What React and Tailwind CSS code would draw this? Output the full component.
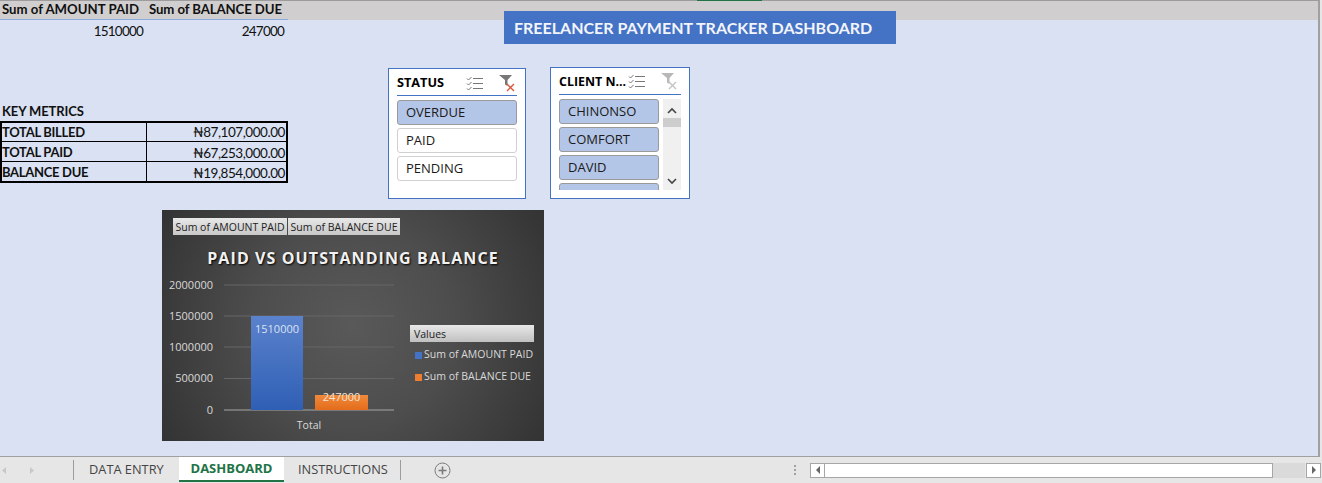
const cellFont = { fontFamily: "Lato, 'Noto Sans', sans-serif" }

function ChecklistIcon({ className }) {
  return (
    <svg width="17" height="15" viewBox="0 0 17 15" className={className} fill="none" stroke="#777777">
      <path d="M1 2.5l1.5 1.5 3-3M1 7.5l1.5 1.5 3-3M1 12.5l1.5 1.5 3-3" strokeWidth="1" />
      <path d="M7 2.5h10M7 7.5h10M7 12.5h10" strokeWidth="1" />
    </svg>
  )
}

function ClearFilterIcon({ active, className }) {
  return (
    <svg width="17" height="18" viewBox="0 0 17 18" className={className} fill="none">
      <path d="M1 1h13L9.5 6v6L7 10.5V6z" fill={active ? '#777777' : '#b8b8b8'} />
      <path d="M9 10l7 7M16 10l-7 7" stroke={active ? '#d9583b' : '#c4c4c4'} strokeWidth="1.4" />
    </svg>
  )
}

function SlicerItem({ label, selected, className = '' }) {
  return (
    <div className={`flex items-center pl-2 text-[13px] text-[#1a1a1a] rounded-[3px] border ${selected ? 'bg-[#b4c6e7] border-[#9a9a9a]' : 'bg-white border-[#d0d0d0]'} ${className}`}>
      {label}
    </div>
  )
}

function Tab({ children, active }) {
  if (active) {
    return (
      <div className="w-[105px] h-[25px] -mt-px bg-white border-b-2 border-[#217346] flex items-center justify-center text-[13px] font-bold text-[#217346]">
        {children}
      </div>
    )
  }
  return <div className="h-full flex items-center text-[12.8px] text-[#444444]">{children}</div>
}

const ticks = [
  { label: '2000000', y: 75 },
  { label: '1500000', y: 106 },
  { label: '1000000', y: 137 },
  { label: '500000', y: 168.5 },
  { label: '0', y: 200 },
]

function Chart() {
  return (
    <div className="absolute left-[162px] top-[190px] w-[382px] h-[231px] bg-[radial-gradient(circle,#595959_0%,#4d4d4d_45%,#333333_100%)] text-[#d9d9d9]" style={{ fontFamily: "'Open Sans', sans-serif" }}>
      <div className="flex gap-px pl-[11px] pt-2">
        <div className="w-[114px] h-[17px] bg-gradient-to-b from-[#e8e8e8] to-[#c8c8c8] text-[10.5px] leading-[18px] text-center text-[#222222] whitespace-nowrap">Sum of AMOUNT PAID</div>
        <div className="w-[112px] h-[17px] bg-gradient-to-b from-[#e8e8e8] to-[#c8c8c8] text-[10.5px] leading-[18px] text-center text-[#222222] whitespace-nowrap">Sum of BALANCE DUE</div>
      </div>
      <div className="mt-[11px] w-full text-center text-[16px] font-bold tracking-[1.1px] text-[#f2f2f2] [text-shadow:1px_1px_2px_#000000]">
        PAID VS OUTSTANDING BALANCE
      </div>
      <svg width="382" height="231" className="absolute left-0 top-0" fontFamily="'Open Sans', sans-serif" fontSize="10.5">
        <defs>
          <linearGradient id="blueBar" x1="0" y1="0" x2="0" y2="1">
            <stop offset="0" stopColor="#5b82cc" />
            <stop offset="1" stopColor="#2f5fb5" />
          </linearGradient>
          <linearGradient id="orangeBar" x1="0" y1="0" x2="0" y2="1">
            <stop offset="0" stopColor="#f08a3c" />
            <stop offset="1" stopColor="#e36c1a" />
          </linearGradient>
        </defs>
        {ticks.map((t) => (
          <g key={t.label}>
            <line x1="62" x2="232" y1={t.y} y2={t.y} stroke={t.label === '0' ? '#a6a6a6' : '#666666'} />
            <text x="51" y={t.y + 3.5} textAnchor="end" fontSize="11" fill="#d9d9d9">{t.label}</text>
          </g>
        ))}
        <rect x="89" y="106" width="52" height="94" fill="url(#blueBar)" />
        <rect x="153" y="185" width="53" height="15" fill="url(#orangeBar)" />
        <text x="115" y="123" textAnchor="middle" fontSize="11" fill="#d9e2f3">1510000</text>
        <text x="179.5" y="191" textAnchor="middle" fontSize="11" fill="#f2e3d5">247000</text>
        <text x="147" y="219" textAnchor="middle" fill="#d9d9d9">Total</text>
      </svg>
      <div className="absolute left-[248px] top-[115px] w-[124px] text-[10.5px]">
        <div className="h-[17px] pl-1 leading-[19px] bg-gradient-to-b from-[#e8e8e8] to-[#c0c0c0] text-[#222222]">Values</div>
        <div className="mt-[6px] flex h-[14px] items-center gap-[2px] pl-[5px] whitespace-nowrap">
          <span className="w-[7px] h-[7px] bg-[#4472c4]" />
          <span>Sum of AMOUNT PAID</span>
        </div>
        <div className="mt-2 flex h-[14px] items-center gap-[2px] pl-[5px] whitespace-nowrap">
          <span className="w-[7px] h-[7px] bg-[#ed7d31]" />
          <span>Sum of BALANCE DUE</span>
        </div>
      </div>
    </div>
  )
}

function MetricRow({ name, value, height, pad, last }) {
  return (
    <div className={`flex items-center ${height} ${last ? '' : 'border-b border-black'}`}>
      <div className={`w-[145px] h-full border-r border-black flex items-center text-[13px] tracking-[-0.3px] font-bold text-[#111111] ${pad}`}>{name}</div>
      <div className={`flex-1 h-full pr-px flex items-center justify-end text-[13.5px] tracking-[-0.45px] text-[#111111] ${pad}`}>{value}</div>
    </div>
  )
}

export default function App() {
  return (
    <div className="w-[1322px] h-[483px] overflow-hidden flex flex-col bg-[#e6e6e6]" style={{ fontFamily: "'Open Sans', sans-serif" }}>
      <div className="relative w-[1320px] h-[20px] shrink-0 bg-[#d0cece] border-t border-[#9c9c9c] border-r-2 border-r-[#a0a0a0] flex text-[13.2px] font-bold text-[#111111]" style={cellFont}>
        <div className="absolute left-[697px] -top-px w-[65px] h-px bg-[#217346]" />
        <div className="w-[288px] flex items-center pl-[2px] border-b border-[#8ea9db] whitespace-nowrap">
          <span className="w-[147px]">Sum of AMOUNT PAID</span>
          <span className="tracking-[-0.1px]">Sum of BALANCE DUE</span>
        </div>
      </div>

      <div className="relative w-[1320px] flex-1 bg-[#d9e1f2] border-r-2 border-b border-[#a0a0a0]">
        <div className="w-[288px] text-[13.5px] text-[#111111]" style={cellFont}>
          <div className="flex h-[23px] items-center tracking-[-0.8px]">
            <div className="w-[143px] text-right">1510000</div>
            <div className="w-[141px] text-right">247000</div>
          </div>
          <div className="mt-[58px] pl-[2px] pt-[2px] h-5 flex items-center text-[13px] tracking-[-0.1px] font-bold">KEY METRICS</div>
          <div className="border-2 border-black">
            <MetricRow name="TOTAL BILLED" value="₦87,107,000.00" height="h-[19px]" pad="pt-px" />
            <MetricRow name="TOTAL PAID" value="₦67,253,000.00" height="h-5" pad="pt-[3px]" />
            <MetricRow name="BALANCE DUE" value="₦19,854,000.00" height="h-[19px]" pad="pt-[3px]" last />
          </div>
        </div>

        <div className="absolute left-[504px] -top-[9px] w-[392px] h-[33px] bg-[#4472c4] pl-[10px] pt-px flex items-center text-[16px] font-bold text-[#f2f5fb]" style={cellFont}>
          FREELANCER PAYMENT TRACKER DASHBOARD
        </div>

        <div className="absolute left-[388px] top-[48px] w-[138px] h-[131px] bg-white border border-[#4472c4] px-2">
          <div className="h-[27px] flex items-center pt-[2px] border-b border-[#4472c4] text-[12.7px] font-bold text-black">
            <span className="flex-1">STATUS</span>
            <ChecklistIcon className="mr-[15px]" />
            <ClearFilterIcon active className="mr-[2px]" />
          </div>
          <div className="mt-1 flex flex-col gap-[3px]">
            <SlicerItem label="OVERDUE" selected className="h-[25px]" />
            <SlicerItem label="PAID" className="h-[25px]" />
            <SlicerItem label="PENDING" className="h-[25px]" />
          </div>
        </div>

        <div className="absolute left-[550px] top-[47px] w-[140px] h-[132px] bg-white border border-[#4472c4] px-2">
          <div className="h-[27px] flex items-center pt-[2px] border-b border-[#4472c4] text-[12.4px] font-bold text-black">
            <span className="flex-1 whitespace-nowrap">CLIENT N...</span>
            <ChecklistIcon className="mr-[15px] -mt-[2px]" />
            <ClearFilterIcon className="mr-[4px] -mt-[2px]" />
          </div>
          <div className="mt-1 flex gap-1 h-[91px] overflow-hidden">
            <div className="w-[100px] flex flex-col gap-[3px] shrink-0">
              <SlicerItem label="CHINONSO" selected className="h-[25px] shrink-0" />
              <SlicerItem label="COMFORT" selected className="h-[25px] shrink-0" />
              <SlicerItem label="DAVID" selected className="h-[25px] shrink-0" />
              <SlicerItem label="" selected className="h-[25px] shrink-0" />
            </div>
            <div className="w-[18px] h-full bg-[#f0f0f0] flex flex-col items-center relative">
              <svg width="10" height="7" viewBox="0 0 10 7" className="mt-[8px]" fill="none" stroke="#444444" strokeWidth="1.6"><path d="M1 6l4-4 4 4" /></svg>
              <div className="w-full h-[9px] mt-[4px] bg-[#cdcdcd]" />
              <svg width="10" height="7" viewBox="0 0 10 7" className="absolute bottom-[5px]" fill="none" stroke="#444444" strokeWidth="1.6"><path d="M1 1l4 4 4-4" /></svg>
            </div>
          </div>
        </div>

        <Chart />
      </div>

      <div className="h-[26px] shrink-0 flex items-center relative">
        <div className="w-[73px] h-full flex items-center pl-[2px] gap-[24px]">
          <svg width="4" height="7" viewBox="0 0 4 7" fill="#c8c8c8"><path d="M4 0v7L0 3.5z" /></svg>
          <svg width="4" height="7" viewBox="0 0 4 7" fill="#c8c8c8"><path d="M0 0v7l4-3.5z" /></svg>
        </div>
        <div className="w-px h-[20px] bg-[#9c9c9c]" />
        <div className="flex items-center h-full">
          <div className="w-[105px] pl-[15px] pr-px"><Tab>DATA ENTRY</Tab></div>
          <Tab active>DASHBOARD</Tab>
          <div className="w-[116px] pl-[14px]"><Tab>INSTRUCTIONS</Tab></div>
        </div>
        <div className="w-px h-[20px] bg-[#9c9c9c]" />
        <svg width="17" height="17" viewBox="0 0 17 17" className="ml-[33px]" fill="none" stroke="#7a7a7a">
          <circle cx="8.5" cy="8.5" r="7.5" />
          <path d="M8.5 4.5v8M4.5 8.5h8" strokeWidth="1.6" />
        </svg>
        <div className="ml-[343px] flex flex-col gap-[2px]">
          <span className="w-[2px] h-[2px] bg-[#a0a0a0]" />
          <span className="w-[2px] h-[2px] bg-[#a0a0a0]" />
          <span className="w-[2px] h-[2px] bg-[#a0a0a0]" />
        </div>
        <div className="ml-[14px] flex h-[15px] w-[511px] items-stretch">
          <div className="w-[15px] bg-white border border-[#a6a6a6] flex items-center justify-center">
            <svg width="4" height="8" viewBox="0 0 4 8" fill="#666666"><path d="M4 0v8L0 4z" /></svg>
          </div>
          <div className="w-[448px] bg-white border-y border-r border-[#a6a6a6]" />
          <div className="w-[32px] mr-px bg-[#dadada]" />
          <div className="w-[15px] bg-white border border-[#a6a6a6] flex items-center justify-center">
            <svg width="4" height="8" viewBox="0 0 4 8" fill="#666666"><path d="M0 0v8l4-4z" /></svg>
          </div>
        </div>
      </div>
    </div>
  )
}
